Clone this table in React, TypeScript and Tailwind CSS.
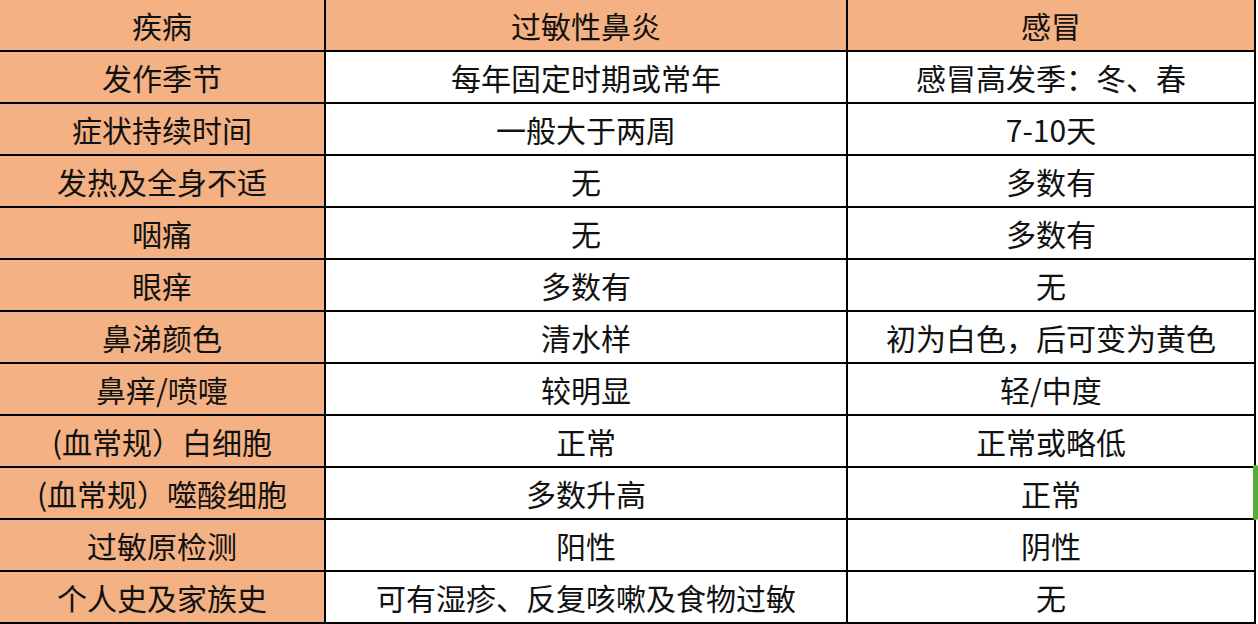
import React from 'react';

const rows: [string, string, string][] = [
  ['发作季节', '每年固定时期或常年', '感冒高发季：冬、春'],
  ['症状持续时间', '一般大于两周', '7-10天'],
  ['发热及全身不适', '无', '多数有'],
  ['咽痛', '无', '多数有'],
  ['眼痒', '多数有', '无'],
  ['鼻涕颜色', '清水样', '初为白色，后可变为黄色'],
  ['鼻痒/喷嚏', '较明显', '轻/中度'],
  ['(血常规）白细胞', '正常', '正常或略低'],
  ['(血常规）噬酸细胞', '多数升高', '正常'],
  ['过敏原检测', '阳性', '阴性'],
  ['个人史及家族史', '可有湿疹、反复咳嗽及食物过敏', '无'],
];

const font = { fontFamily: '"Microsoft YaHei", "Noto Sans CJK SC", "Noto Sans", sans-serif' };

const App: React.FC = () => {
  return (
    <div className="w-[1258px] h-[624px] bg-white relative overflow-hidden" style={font}>
      <div className="grid grid-cols-[324px_520px_406px] auto-rows-[50px] gap-[2px] pr-[2px] pb-[2px] bg-black w-[1256px] text-[30px] text-[#111] leading-none">
        {/* header */}
        <div className="bg-[#f4b183] flex items-center justify-center">疾病</div>
        <div className="bg-[#f4b183] flex items-center justify-center">过敏性鼻炎</div>
        <div className="bg-[#f4b183] flex items-center justify-center">感冒</div>

        {rows.map((r) => (
          <React.Fragment key={r[0]}>
            <div className="bg-[#f4b183] flex items-center justify-center">{r[0]}</div>
            <div className="bg-white flex items-center justify-center">{r[1]}</div>
            <div className="bg-white flex items-center justify-center">{r[2]}</div>
          </React.Fragment>
        ))}
      </div>

      {/* green marker on the right edge */}
      <div className="absolute left-[1253px] top-[465px] w-[5px] h-[55px] rounded-[2px] bg-[#56ad36]" />
    </div>
  );
};

export default App;
